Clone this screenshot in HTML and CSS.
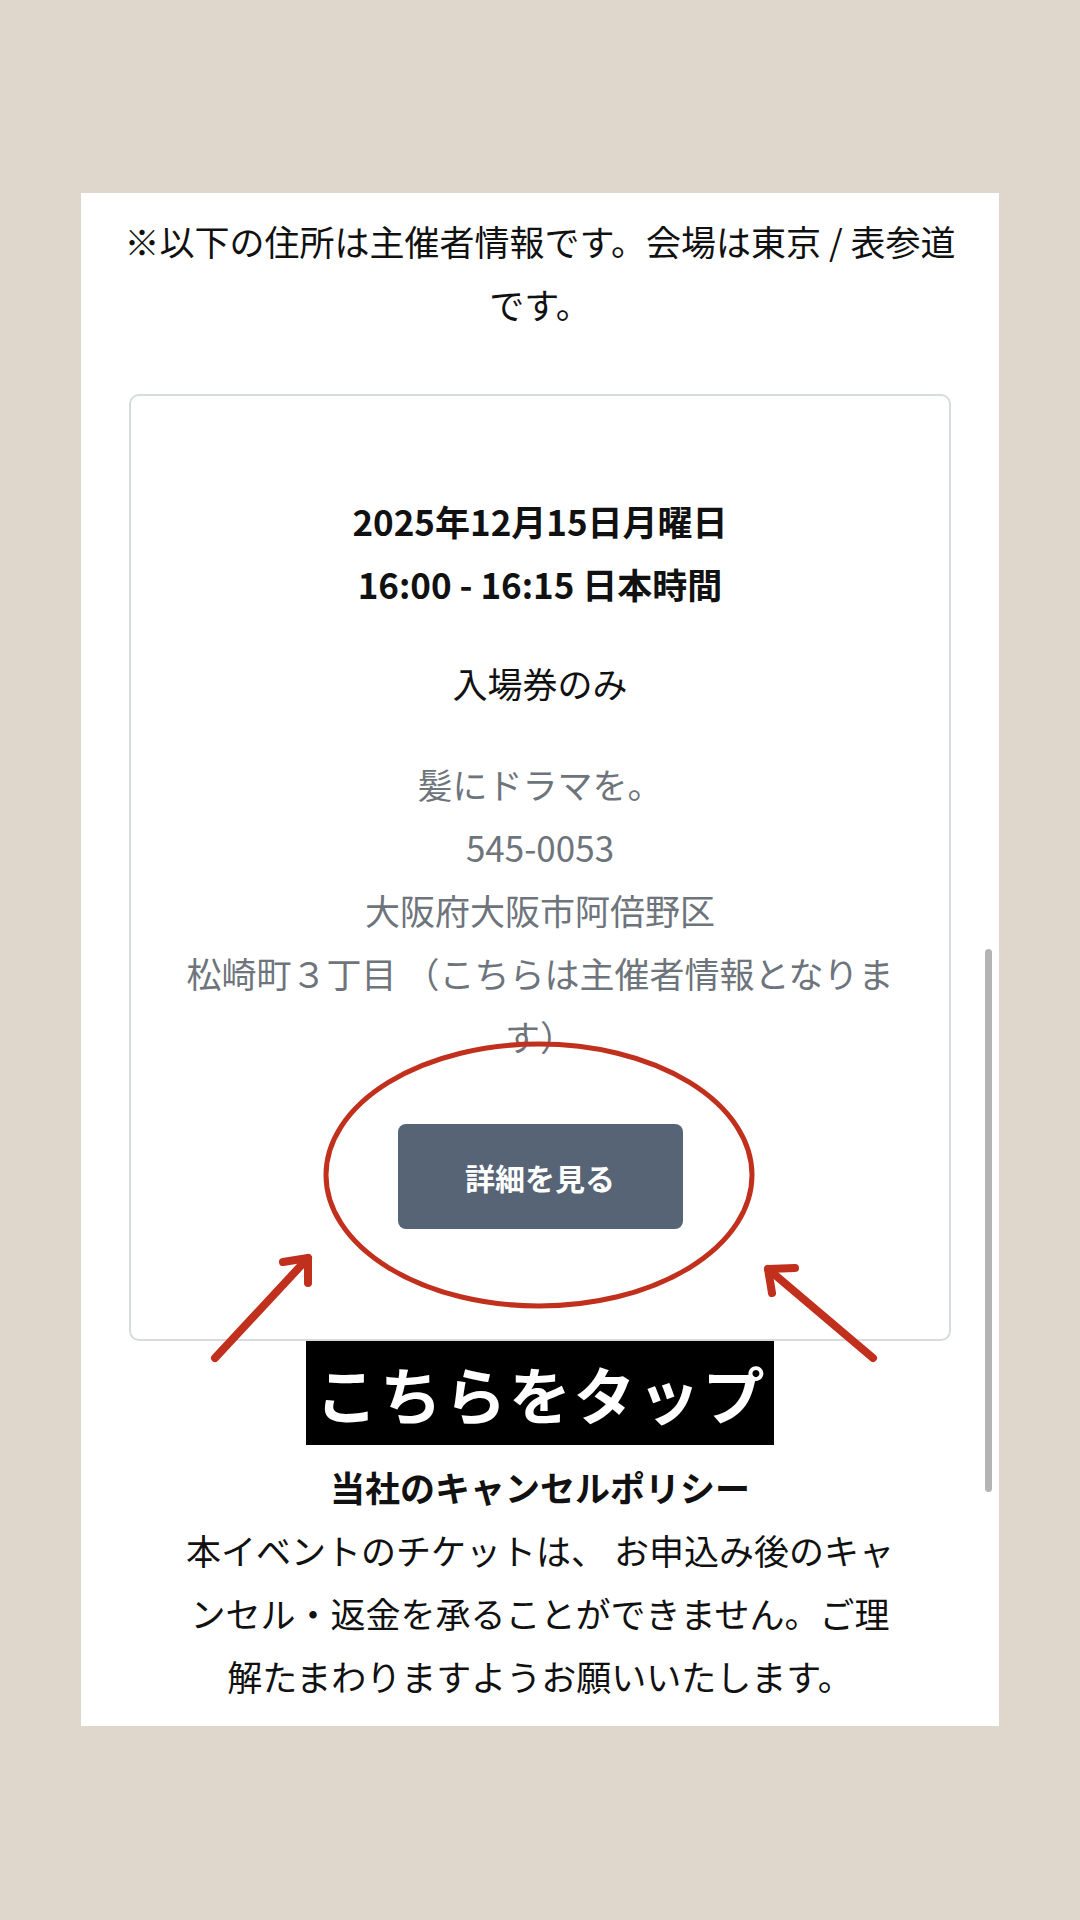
FILE: index.html
```html
<!DOCTYPE html>
<html lang="ja">
<head>
<meta charset="utf-8">
<title>イベント詳細</title>
<link rel="stylesheet" href="styles.css">
</head>
<body>
<div class="panel">
  <p class="notice">※以下の住所は主催者情報です。会場は東京 / 表参道です。</p>
  <div class="card">
    <div class="date">
      <div>2025年12月15日月曜日</div>
      <div>16:00 - 16:15 日本時間</div>
    </div>
    <div class="ticket">入場券のみ</div>
    <div class="address">
      <div>髪にドラマを。</div>
      <div>545-0053</div>
      <div>大阪府大阪市阿倍野区</div>
      <div>松崎町３丁目 （こちらは主催者情報となります）</div>
    </div>
    <div class="btn-row"><span class="btn">詳細を見る</span></div>
  </div>
  <div class="policy">
    <div class="policy-title">当社のキャンセルポリシー</div>
    <div class="policy-body">本イベントのチケットは、 お申込み後のキャンセル・返金を承ることができません。ご理解たまわりますようお願いいたします。</div>
  </div>

  <svg class="annot" viewBox="0 0 918 1533" width="918" height="1533" aria-hidden="true">
    <ellipse cx="458" cy="982" rx="213" ry="131" fill="none" stroke="#c1301d" stroke-width="5"/>
    <g fill="none" stroke="#c1301d" stroke-width="8" stroke-linecap="round" stroke-linejoin="round">
      <path d="M134 1165 L227 1065"/>
      <path d="M202 1069 L227 1065 L227 1090"/>
      <path d="M792 1165 L687 1076"/>
      <path d="M714 1075 L687 1076 L691 1100"/>
    </g>
  </svg>
  <div class="tap-label">こちらをタップ</div>
  <div class="scrollbar"></div>
</div>
</body>
</html>
```

FILE: styles.css
```css
html, body {
  margin: 0;
  padding: 0;
}
body {
  background: #dfd7cc;
  min-height: 1920px;
  padding-top: 193px;
  box-sizing: border-box;
  font-family: "Noto Sans CJK JP", "Noto Sans", sans-serif;
  color: #111111;
}
.panel {
  position: relative;
  width: 918px;
  margin: 0 auto 0 81px;
  background: #ffffff;
  padding: 16px 36px 19px;
  box-sizing: border-box;
}
.notice {
  margin: 0;
  font-size: 35px;
  line-height: 63px;
  text-align: center;
}
.card {
  margin: 59px 12px 0;
  border: 2px solid #d7dbe0;
  border-radius: 10px;
  padding: 93px 46px 110px;
  text-align: center;
  font-size: 35px;
  line-height: 63px;
}
.date {
  font-weight: 700;
}
.ticket {
  margin-top: 36px;
}
.address {
  margin-top: 38px;
  color: #6e747c;
}
.btn-row {
  margin-top: 57px;
  display: flex;
  justify-content: center;
}
.btn {
  width: 285px;
  height: 105px;
  display: flex;
  align-items: center;
  justify-content: center;
  background: #566476;
  color: #ffffff;
  border-radius: 8px;
  font-size: 30px;
  font-weight: 700;
  line-height: 1;
}
.policy {
  margin-top: 114px;
  padding: 0 60px;
  text-align: center;
  font-size: 35px;
  line-height: 63px;
}
.policy-title {
  font-weight: 700;
}
.annot {
  position: absolute;
  left: 0;
  top: 0;
  pointer-events: none;
}
.tap-label {
  position: absolute;
  left: 225px;
  top: 1148px;
  width: 468px;
  height: 104px;
  background: #000000;
  color: #ffffff;
  font-size: 62px;
  font-weight: 700;
  line-height: 104px;
  text-align: center;
  letter-spacing: 2.5px;
  text-indent: 2.5px;
}
.scrollbar {
  position: absolute;
  right: 7px;
  top: 756px;
  width: 7px;
  height: 543px;
  border-radius: 4px;
  background: #b4b4b4;
}
```
